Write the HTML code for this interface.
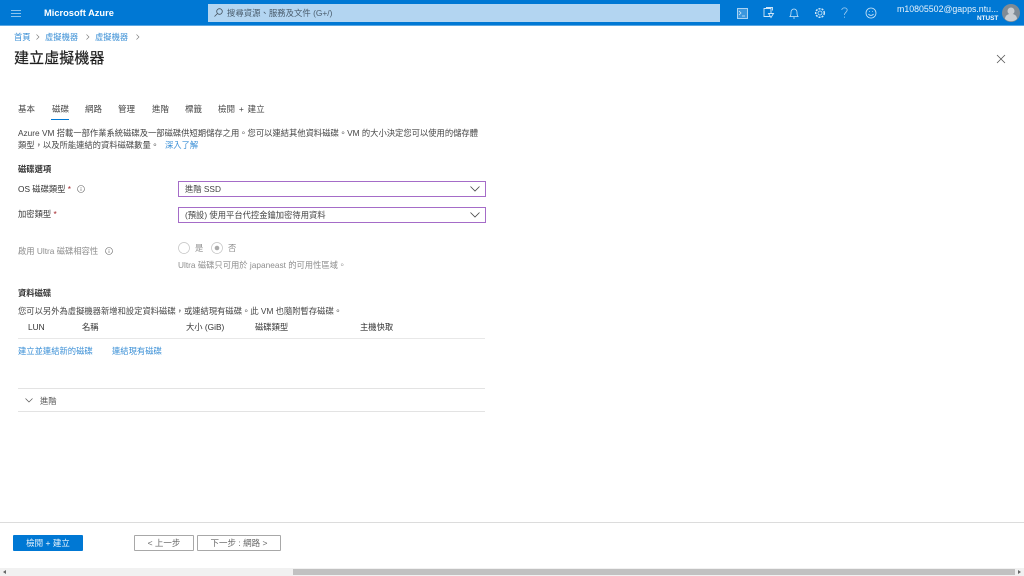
<!DOCTYPE html>
<html lang="zh-Hant"><head><meta charset="utf-8"><title>建立虛擬機器</title>
<style>
html,body{margin:0;padding:0;width:1024px;height:576px;overflow:hidden;background:#fff}
body{font-family:"Liberation Sans","Noto Sans CJK TC",sans-serif;font-size:8.3px;color:#444}
#w{position:absolute;left:0;top:0;width:1024px;height:576px;filter:blur(.35px);overflow:hidden}
.t{position:absolute;white-space:nowrap;line-height:12px}
.b{position:absolute}
.l{color:#3a8fd6}
.sel{position:absolute;left:178px;width:306px;height:14px;border:1px solid #a56cc8;line-height:14px;text-indent:6px;color:#444;white-space:nowrap}
.g{color:#8d8d8d}
svg{position:absolute;overflow:visible}
</style></head><body><div id="w">
<div class="b" style="left:0;top:0;width:1024px;height:25px;background:#0078d4"></div>
<div class="b" style="left:0;top:25px;width:1024px;height:1px;background:#5aa7e3"></div>
<svg style="left:11px;top:10px" width="10" height="7" fill="none" stroke="#bcdcf5" stroke-width=".8"><path d="M0 .5H10M0 3.5H10M0 6.5H10"/></svg>
<div class="t" style="left:44px;top:7px;color:#fff;font-size:9.3px;font-weight:bold">Microsoft Azure</div>
<div class="b" style="left:208px;top:4px;width:512px;height:18px;background:#b3d5f1"></div>
<svg style="left:214px;top:8px" width="9" height="9" fill="none" stroke="#44525e" stroke-width=".8"><circle cx="5.5" cy="3.5" r="2.8"/><path d="M3.5 5.5L.5 8.5"/></svg>
<div class="t" style="left:227px;top:7px;color:#4a5c6c;font-size:8.4px">搜尋資源、服務及文件 (G+/)</div>

<svg style="left:737px;top:8px" width="11" height="11" fill="none" stroke="#cfe6f8" stroke-width=".8"><rect x=".5" y=".5" width="10" height="10" fill="#3b97de"/><path d="M2 3l2 2-2 2M5 8h3"/></svg>
<svg style="left:763px;top:7px" width="12" height="12" fill="none" stroke="#cfe6f8" stroke-width=".9"><path d="M1 1.5h7v8H1zM3 .5h6.5v3"/><path d="M5.5 6.5h5l-2.5 4z" fill="#0078d4"/></svg>
<svg style="left:789px;top:8px" width="10" height="11" fill="none" stroke="#cfe6f8" stroke-width=".8"><path d="M1 8.500c1-1 1-2 1-4s1.300-3.500 3-3.500 3 1.500 3 3.500 0 3 1 4zM4 10h2"/></svg>
<svg style="left:814px;top:7px" width="12" height="12" fill="none" stroke="#cfe6f8" stroke-width=".8"><circle cx="6" cy="6" r="2"/><circle cx="6" cy="6" r="4.300" stroke-dasharray="2 1.100" stroke-width="1.500"/></svg>
<svg style="left:841px;top:7px" width="7" height="12" fill="none" stroke="#a9d2f2" stroke-width=".8"><path d="M.8 3C.8 .2 6.200 .2 6.200 3 6.200 5.200 3.500 5.200 3.500 8M3.500 9.600v1.200"/></svg>
<svg style="left:865px;top:7px" width="12" height="12" fill="none" stroke="#cfe6f8" stroke-width=".8"><circle cx="6" cy="6" r="5"/><path d="M3.500 7c1 1.800 4 1.800 5 0M4 4.500h.8M7.200 4.500H8"/></svg>
<div class="t" style="left:897px;top:3px;color:#e6f2fb;font-size:8.8px">m10805502@gapps.ntu...</div>
<div class="t" style="left:977px;top:13px;color:#f4f9fd;font-size:6.4px;font-weight:bold">NTUST</div>
<svg style="left:1002px;top:4px" width="18" height="18"><circle cx="9" cy="9" r="9" fill="#7f8b95"/><circle cx="9" cy="7" r="3.5" fill="#c9ced2"/><path d="M3 15c0-7 12-7 12 0a9 9 0 0 1-12 0z" fill="#c9ced2"/></svg>

<div class="t l" style="left:14px;top:31px">首頁</div>
<div class="t l" style="left:45px;top:31px">虛擬機器</div>
<div class="t l" style="left:95px;top:31px">虛擬機器</div>
<svg style="left:36px;top:34px" width="4" height="6" fill="none" stroke="#777" stroke-width=".6"><path d="M.5 .5l2.500 2.500-2.500 2.500"/></svg>
<svg style="left:86px;top:34px" width="4" height="6" fill="none" stroke="#777" stroke-width=".6"><path d="M.5 .5l2.500 2.500-2.500 2.500"/></svg>
<svg style="left:136px;top:34px" width="4" height="6" fill="none" stroke="#777" stroke-width=".6"><path d="M.5 .5l2.500 2.500-2.500 2.500"/></svg>
<div class="t" style="left:14px;top:50px;font-size:15px;line-height:18px;color:#1e1e1e;letter-spacing:.1px;-webkit-text-stroke:.2px #1e1e1e">建立虛擬機器</div>
<svg style="left:997px;top:55px" width="8" height="8" fill="none" stroke="#555" stroke-width=".8"><path d="M0 0L8 8M8 0L0 8"/></svg>

<div class="t" style="left:18px;top:103px;font-size:8.5px">基本</div>
<div class="t" style="left:52px;top:103px;font-size:8.5px">磁碟</div>
<div class="t" style="left:85px;top:103px;font-size:8.5px">網路</div>
<div class="t" style="left:118px;top:103px;font-size:8.5px">管理</div>
<div class="t" style="left:152px;top:103px;font-size:8.5px">進階</div>
<div class="t" style="left:185px;top:103px;font-size:8.5px">標籤</div>
<div class="t" style="left:218px;top:103px;font-size:8.5px;word-spacing:1.5px">檢閱 + 建立</div>
<div class="b" style="left:51px;top:119px;width:18px;height:1px;background:#0078d4"></div>

<div class="t" style="left:18px;top:127px">Azure VM 搭載一部作業系統磁碟及一部磁碟供短期儲存之用。您可以連結其他資料磁碟。VM 的大小決定您可以使用的儲存體</div>
<div class="t" style="left:18px;top:139px">類型，以及所能連結的資料磁碟數量。</div>
<div class="t l" style="left:165px;top:139px">深入了解</div>

<div class="t" style="left:18px;top:163px;color:#333;font-weight:bold">磁碟選項</div>
<div class="t" style="left:18px;top:183px;color:#333">OS 磁碟類型 <span style="color:#a4262c">*</span></div>
<svg style="left:77px;top:185px" width="8" height="8" fill="none" stroke="#666" stroke-width=".6"><circle cx="4" cy="4" r="3.5"/><path d="M4 3.500V6M4 2v.8"/></svg>
<div class="sel" style="top:181px">進階 SSD</div>
<svg style="left:470px;top:186px" width="10" height="6" fill="none" stroke="#444" stroke-width=".8"><path d="M.5 .5L5 5 9.500 .5"/></svg>
<div class="t" style="left:18px;top:208px;color:#333">加密類型 <span style="color:#a4262c">*</span></div>
<div class="sel" style="top:207px">(預設) 使用平台代控金鑰加密待用資料</div>
<svg style="left:470px;top:212px" width="10" height="6" fill="none" stroke="#444" stroke-width=".8"><path d="M.5 .5L5 5 9.500 .5"/></svg>

<div class="t g" style="left:18px;top:245px">啟用 Ultra 磁碟相容性</div>
<svg style="left:105px;top:247px" width="8" height="8" fill="none" stroke="#666" stroke-width=".6"><circle cx="4" cy="4" r="3.5"/><path d="M4 3.500V6M4 2v.8"/></svg>
<svg style="left:178px;top:242px" width="12" height="12" fill="none" stroke="#c4c4c4" stroke-width=".7"><circle cx="6" cy="6" r="5.5"/></svg>
<div class="t g" style="left:195px;top:242px">是</div>
<svg style="left:211px;top:242px" width="12" height="12" fill="none" stroke="#c4c4c4" stroke-width=".7"><circle cx="6" cy="6" r="5.5"/><circle cx="6" cy="6" r="2.3" fill="#aaa" stroke="none"/></svg>
<div class="t g" style="left:228px;top:242px">否</div>
<div class="t g" style="left:178px;top:259px">Ultra 磁碟只可用於 japaneast 的可用性區域。</div>

<div class="t" style="left:18px;top:287px;color:#333;font-weight:bold">資料磁碟</div>
<div class="t" style="left:18px;top:305px">您可以另外為虛擬機器新增和設定資料磁碟，或連結現有磁碟。此 VM 也隨附暫存磁碟。</div>
<div class="t" style="left:28px;top:321px;color:#333">LUN</div>
<div class="t" style="left:82px;top:321px;color:#333">名稱</div>
<div class="t" style="left:186px;top:321px;color:#333">大小 (GiB)</div>
<div class="t" style="left:255px;top:321px;color:#333">磁碟類型</div>
<div class="t" style="left:360px;top:321px;color:#333">主機快取</div>
<div class="b" style="left:18px;top:338px;width:467px;height:1px;background:#e8e8e8"></div>
<div class="t l" style="left:18px;top:345px">建立並連結新的磁碟</div>
<div class="t l" style="left:112px;top:345px">連結現有磁碟</div>

<div class="b" style="left:18px;top:388px;width:467px;height:1px;background:#e3e3e3"></div>
<svg style="left:25px;top:398px" width="8" height="5" fill="none" stroke="#555" stroke-width=".7"><path d="M.5 .5L4 4 7.500 .5"/></svg>
<div class="t" style="left:40px;top:395px;color:#555">進階</div>
<div class="b" style="left:18px;top:411px;width:467px;height:1px;background:#e3e3e3"></div>

<div class="b" style="left:0;top:522px;width:1024px;height:1px;background:#dcdcdc"></div>
<div class="b" style="left:13px;top:535px;width:70px;height:16px;background:#0078d4;border-radius:1px"></div>
<div class="t" style="left:13px;top:537px;width:70px;text-align:center;color:#f0f7fd;font-size:8.5px">檢閱 + 建立</div>
<div class="b" style="left:134px;top:535px;width:58px;height:14px;border:1px solid #a8a8a8;border-radius:1px"></div>
<div class="t" style="left:134px;top:537px;width:60px;text-align:center;color:#666;font-size:8.5px">&lt; 上一步</div>
<div class="b" style="left:197px;top:535px;width:82px;height:14px;border:1px solid #a8a8a8;border-radius:1px"></div>
<div class="t" style="left:197px;top:537px;width:84px;text-align:center;color:#666;font-size:8.5px">下一步 : 網路 &gt;</div>

<div class="b" style="left:0;top:568px;width:1024px;height:8px;background:#f1f1f1"></div>
<div class="b" style="left:293px;top:569px;width:722px;height:6px;background:#c1c1c1"></div>
<svg style="left:3px;top:570px" width="3" height="4"><path d="M3 0V4L0 2z" fill="#666"/></svg>
<svg style="left:1018px;top:570px" width="3" height="4"><path d="M0 0V4L3 2z" fill="#666"/></svg>
</div></body></html>
